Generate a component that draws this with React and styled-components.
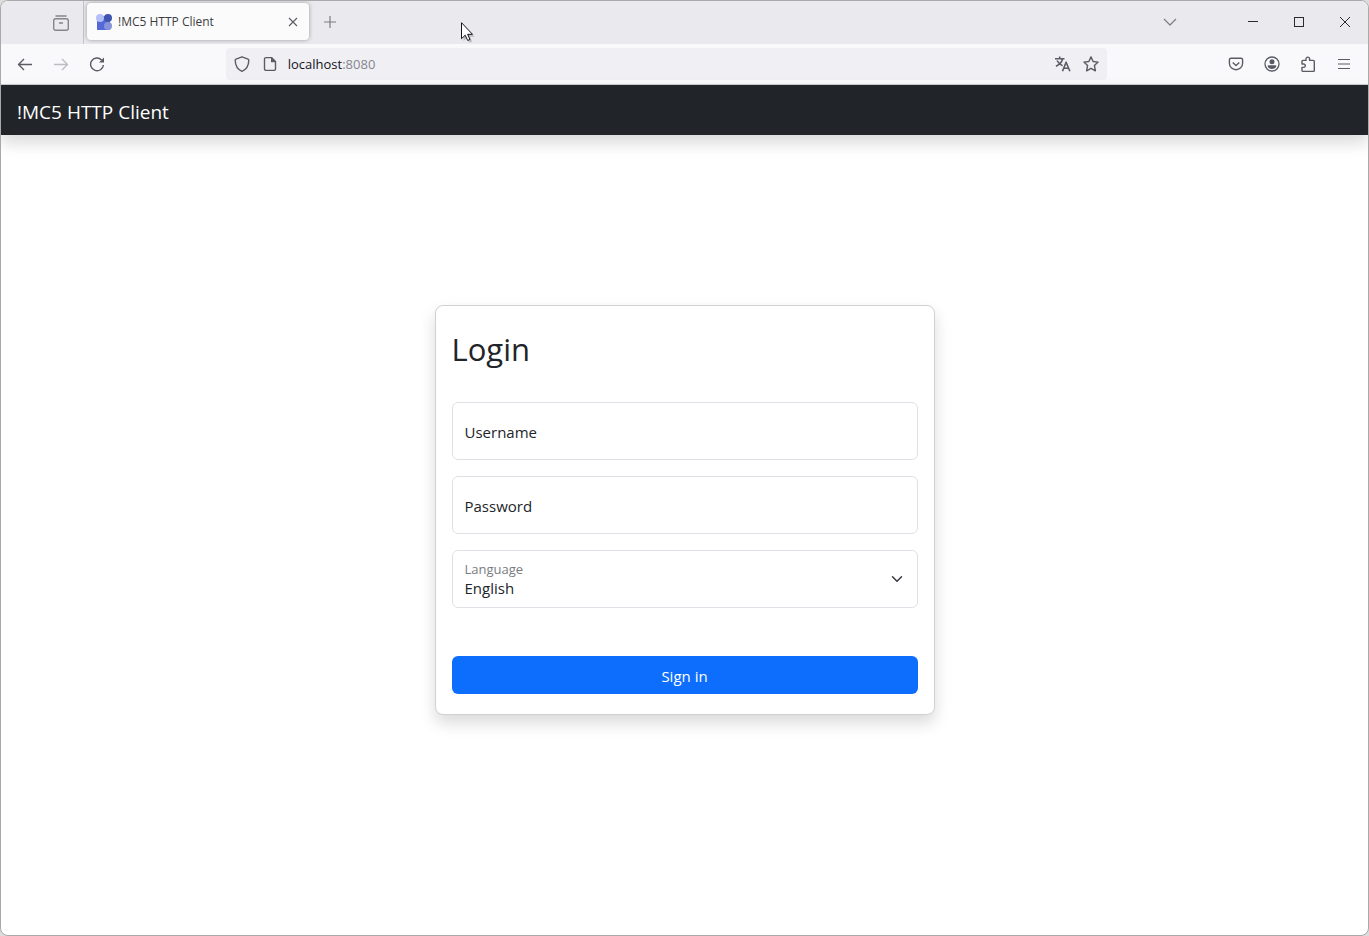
import React from "react";
import styled, { createGlobalStyle, css } from "styled-components";

const GlobalStyle = createGlobalStyle`
  * {
    box-sizing: border-box;
  }
  body {
    margin: 0;
    background: #dcdcdc;
    color: #212529;
    font-family: "Open Sans", "Noto Sans", sans-serif;
  }
  button, input, select {
    font-family: inherit;
  }
`;

const App = () => (
  <Window>
    <GlobalStyle />
    <TabStrip>
      <RecentButton aria-label="Recent browsing">
        <Svg size={18} viewBox="0 0 18 18" weight={1.4}>
          <path d="M3.5 2h11" />
          <rect x="1.7" y="4.7" width="14.6" height="11.6" rx="2" />
          <path d="M7 9h4" />
        </Svg>
      </RecentButton>
      <Tab>
        <Favicon viewBox="0 0 16 16">
          <rect x="1" y="2" width="13" height="14" fill="#5468d8" />
          <circle cx="4" cy="4" r="4" fill="#b3c0fa" />
          <circle cx="12" cy="4" r="4" fill="#4055b0" />
          <circle cx="12" cy="12" r="4" fill="#8794dc" />
        </Favicon>
        <TabTitle>!MC5 HTTP Client</TabTitle>
        <TabClose aria-label="Close tab">
          <Svg size={10} viewBox="0 0 10 10" weight={1.1}>
            <path d="M1 1l8 8M9 1L1 9" />
          </Svg>
        </TabClose>
      </Tab>
      <StripButton aria-label="New tab">
        <Svg size={12} viewBox="0 0 12 12">
          <path d="M6 0v12M0 6h12" />
        </Svg>
      </StripButton>
      <Filler />
      <ListTabs aria-label="List all tabs">
        <Svg size={14} viewBox="0 0 14 14">
          <path d="M1 4l6 6 6-6" />
        </Svg>
      </ListTabs>
      <WindowButton aria-label="Minimize">
        <Svg size={10} viewBox="0 0 10 10" crisp>
          <path d="M0 4.5h10" />
        </Svg>
      </WindowButton>
      <WindowButton aria-label="Maximize">
        <Svg size={10} viewBox="0 0 10 10" crisp>
          <rect x="0.5" y="0.5" width="9" height="9" />
        </Svg>
      </WindowButton>
      <WindowButton aria-label="Close">
        <Svg size={10} viewBox="0 0 10 10" weight={1}>
          <path d="M0 0l10 10M10 0L0 10" />
        </Svg>
      </WindowButton>
      <Cursor viewBox="0 0 14 21">
        <path d="M2.5 3v16l3.5-3.2 2.6 5 2.6-1.3-2.5-4.8h5z" fill="#0003" stroke="none" />
        <path
          d="M0.5 0.7v16l3.7-3.5 2.5 5.3 2.3-1.1-2.4-5.1h4.9z"
          fill="#fff"
          stroke="#15141a"
        />
      </Cursor>
    </TabStrip>

    <Toolbar>
      <ToolButton aria-label="Back">
        <Svg size={16} viewBox="0 0 16 16" weight={1.4}>
          <path d="M15 8.500H1.5M7 3L1.500 8.500 7 14" />
        </Svg>
      </ToolButton>
      <ToolButton aria-label="Forward" disabled>
        <Svg size={16} viewBox="0 0 16 16" weight={1.4}>
          <path d="M1 8.500h13.500M9 3l5.500 5.500L9 14" />
        </Svg>
      </ToolButton>
      <ToolButton aria-label="Reload">
        <Svg size={16} viewBox="0 0 16 16" weight={1.4}>
          <path d="M12.600 3.900A6.400 6.400 0 1 0 14.400 9" />
          <path d="M15 1.400v5H10z" fill="currentColor" stroke="none" />
        </Svg>
      </ToolButton>
      <Filler />
      <UrlBar>
        <UrlIcon aria-label="Tracking protection">
          <Svg size={16} viewBox="0 0 16 16" weight={1.4}>
            <path d="M8 .8l6 2.300c.5.200.8.600.8 1.100C14.700 9.500 12.500 13.400 8 15.300 3.500 13.400 1.300 9.500 1.200 4.200c0-.5.300-.9.800-1.100z" />
          </Svg>
        </UrlIcon>
        <UrlIcon aria-label="Site information">
          <Svg size={16} viewBox="0 0 16 16" weight={1.4}>
            <path d="M9.500 1.600H4A1.500 1.500 0 0 0 2.500 3.100v9.800A1.500 1.500 0 0 0 4 14.400h8a1.500 1.500 0 0 0 1.500-1.500V5.600z" />
            <path d="M9 1.200V6.300h5z" fill="currentColor" stroke="none" />
          </Svg>
        </UrlIcon>
        <Address>
          localhost<span>:8080</span>
        </Address>
        <UrlIcon aria-label="Translate page">
          <Svg size={16} viewBox="0 0 16 16" weight={1.6}>
            <path d="M0 2.700h9.500M4.700.5v2.200M7.600 2.700C6.800 6 4.300 8.700.9 10.200M2 4.500c1.200 2.400 3 4.200 5.600 5.200" />
            <path d="M7.500 15.200l3.600-9 3.800 9M8.700 12.300h5" />
          </Svg>
        </UrlIcon>
        <UrlIcon aria-label="Bookmark this page">
          <Svg size={16} viewBox="0 0 16 16" weight={1.4}>
            <path d="M8 .9l2.100 4.600 5 .6-3.700 3.400 1 5.300L8 12.300l-4.400 2.500 1-5.300L.9 6.100l5-.6z" />
          </Svg>
        </UrlIcon>
      </UrlBar>
      <Filler />
      <ToolButton aria-label="Save to Pocket">
        <Svg size={16} viewBox="0 0 16 16" weight={1.4}>
          <path d="M3 2.200h10a1.600 1.600 0 0 1 1.600 1.600v3.400a6.600 6.600 0 0 1-13.200 0V3.800A1.600 1.600 0 0 1 3 2.200z" />
          <path d="M4.700 6.400L8 9.500l3.300-3.100" />
        </Svg>
      </ToolButton>
      <ToolButton aria-label="Account">
        <Svg size={16} viewBox="0 0 16 16" weight={1.3}>
          <circle cx="8" cy="8" r="7" />
          <circle cx="8" cy="5.800" r="2.500" fill="currentColor" stroke="none" />
          <path
            d="M4.500 9.300h7a.8.8 0 0 1 .8.900C11.800 12 10.200 13 8 13s-3.800-1-4.300-2.800a.8.800 0 0 1 .8-.9z"
            fill="currentColor"
            stroke="none"
          />
        </Svg>
      </ToolButton>
      <ToolButton aria-label="Extensions">
        <Svg size={16} viewBox="0 0 16 16" weight={1.4}>
          <path d="M6 4.400V2.900a1.800 1.800 0 0 1 3.600 0v1.500h3.700a1 1 0 0 1 1 1v9a1 1 0 0 1-1 1H3a1 1 0 0 1-1-1v-3h1.600a1.700 1.700 0 0 0 0-3.400H2V5.400a1 1 0 0 1 1-1z" />
        </Svg>
      </ToolButton>
      <ToolButton aria-label="Open application menu">
        <Svg size={12} viewBox="0 0 12 12">
          <path d="M0 1.500h12M0 6h12M0 10.500h12" />
        </Svg>
      </ToolButton>
    </Toolbar>

    <NavBar>
      <Brand href="#">!MC5 HTTP Client</Brand>
    </NavBar>

    <Main>
      <LoginCard onSubmit={(e) => e.preventDefault()}>
        <Title>Login</Title>
        <Field>
          <TextInput id="username" type="text" />
          <FieldLabel htmlFor="username">Username</FieldLabel>
        </Field>
        <Field>
          <TextInput id="password" type="password" />
          <FieldLabel htmlFor="password">Password</FieldLabel>
        </Field>
        <Field>
          <Select id="language">
            <option>English</option>
          </Select>
          <FieldLabel htmlFor="language" small>
            Language
          </FieldLabel>
          <Chevron viewBox="0 0 16 16">
            <path d="m2 5 6 6 6-6" />
          </Chevron>
        </Field>
        <SignIn type="submit">Sign in</SignIn>
      </LoginCard>
    </Main>
  </Window>
);

export default App;

const Window = styled.div`
  display: flex;
  flex-direction: column;
  min-height: 100vh;
  overflow: hidden;
  background: #fff;
  border: 1px solid #a9a9a9;
  border-radius: 8px;
`;

const Svg = styled.svg.withConfig({
  shouldForwardProp: (prop) => !["size", "weight", "crisp"].includes(prop),
})`
  display: block;
  width: ${({ size }) => size}px;
  height: ${({ size }) => size}px;
  fill: none;
  stroke: currentColor;
  stroke-width: ${({ weight }) => weight || 1.2};
  stroke-linejoin: round;
  ${({ crisp }) =>
    crisp &&
    css`
      stroke-width: 1;
      shape-rendering: crispEdges;
    `}
`;

const Filler = styled.div`
  flex: 1;
`;

const PlainButton = styled.button`
  display: flex;
  align-items: center;
  justify-content: center;
  flex-shrink: 0;
  padding: 0;
  border: 0;
  background: none;
  color: #5b5b66;
`;

const TabStrip = styled.div`
  position: relative;
  display: flex;
  align-items: center;
  height: 43px;
  padding-bottom: 2px;
  background: #eae9ee;
`;

const RecentButton = styled(PlainButton)`
  align-self: flex-start;
  width: 83px;
  height: 43px;
  padding-left: 38px;
  border-right: 1px solid #c4c4ca;
  color: #85858d;
`;

const Tab = styled.div`
  display: flex;
  align-items: center;
  width: 222px;
  height: 37px;
  margin-left: 3px;
  padding: 0 8px 0 9px;
  border-radius: 4px;
  background: #fbfbfb;
  box-shadow: 0 0 4px rgba(0, 0, 0, 0.35);
`;

const Favicon = styled.svg`
  width: 16px;
  height: 16px;
`;

const TabTitle = styled.span`
  flex: 1;
  margin-left: 6px;
  color: #3c3c43;
  font-size: 12px;
  white-space: nowrap;
`;

const TabClose = styled(PlainButton)`
  width: 16px;
  height: 16px;
`;

const StripButton = styled(PlainButton)`
  width: 42px;
  height: 36px;
  color: #7d7d85;
`;

const ListTabs = styled(StripButton)`
  margin-right: 39px;
`;

const WindowButton = styled(PlainButton)`
  width: 46px;
  height: 40px;
  color: #2b2a33;
`;

const Cursor = styled.svg`
  position: absolute;
  top: 21px;
  left: 460px;
  width: 14px;
  height: 21px;
`;

const Toolbar = styled.div`
  display: flex;
  align-items: center;
  height: 41px;
  padding: 0 6px;
  border-bottom: 1px solid #cccccc;
  background: #f9f9fb;
`;

const ToolButton = styled(PlainButton)`
  width: 36px;
  height: 32px;

  &:disabled {
    color: #bdbdc3;
  }
`;

const UrlBar = styled.div`
  display: flex;
  align-items: center;
  flex: 8;
  height: 32px;
  margin: 0 1px;
  padding: 0 2px;
  border-radius: 4px;
  background: #f0f0f4;
`;

const UrlIcon = styled(PlainButton)`
  width: 28px;
  height: 28px;
`;

const Address = styled.span`
  flex: 1;
  margin-left: 4px;
  color: #15141a;
  font-size: 13px;
  line-height: 20px;

  span {
    color: #85858d;
  }
`;

const NavBar = styled.header`
  display: flex;
  align-items: center;
  height: 50px;
  padding: 4px 16px 0;
  background: #212529;
  box-shadow: 0 8px 16px rgba(0, 0, 0, 0.15);
`;

const Brand = styled.a`
  color: #fff;
  font-size: 19px;
  text-decoration: none;
`;

const Main = styled.main`
  display: flex;
  flex: 1;
  align-items: center;
  justify-content: center;
  padding: 0 16px 50px;
`;

const LoginCard = styled.form`
  display: flex;
  flex-direction: column;
  gap: 16px;
  width: 100%;
  max-width: 500px;
  padding: 24px 16px 20px;
  border: 1px solid #d0d1d2;
  border-radius: 8px;
  background: #fff;
  box-shadow: 0 8px 16px rgba(0, 0, 0, 0.15);
`;

const Title = styled.h2`
  margin: 0 0 18px;
  font-size: 31px;
  font-weight: 400;
  line-height: 38px;
`;

const Field = styled.div`
  position: relative;
  height: 58px;
`;

const control = css`
  display: block;
  width: 100%;
  height: 100%;
  border: 1px solid #dee2e6;
  border-radius: 6px;
  background: #fff;
  color: #212529;
  font-size: 15px;
`;

const TextInput = styled.input`
  ${control}
  padding: 0 12px;
`;

const Select = styled.select`
  ${control}
  appearance: none;
  padding: 18px 36px 0 12px;
`;

const FieldLabel = styled.label.withConfig({
  shouldForwardProp: (prop) => prop !== "small",
})`
  position: absolute;
  top: ${({ small }) => (small ? 9 : 18)}px;
  left: 13px;
  color: ${({ small }) => (small ? "#797c7f" : "#212529")};
  font-size: ${({ small }) => (small ? 13 : 15)}px;
  line-height: ${({ small }) => (small ? 20 : 24)}px;
  pointer-events: none;
`;

const Chevron = styled.svg`
  position: absolute;
  top: 23px;
  right: 15px;
  width: 12px;
  height: 12px;
  fill: none;
  stroke: #343a40;
  stroke-width: 2;
  stroke-linecap: round;
  stroke-linejoin: round;
  pointer-events: none;
`;

const SignIn = styled.button`
  height: 38px;
  margin-top: 32px;
  padding: 2px 12px 0;
  border: 0;
  border-radius: 6px;
  background: #0d6efd;
  color: #fff;
  font-size: 15px;
`;
